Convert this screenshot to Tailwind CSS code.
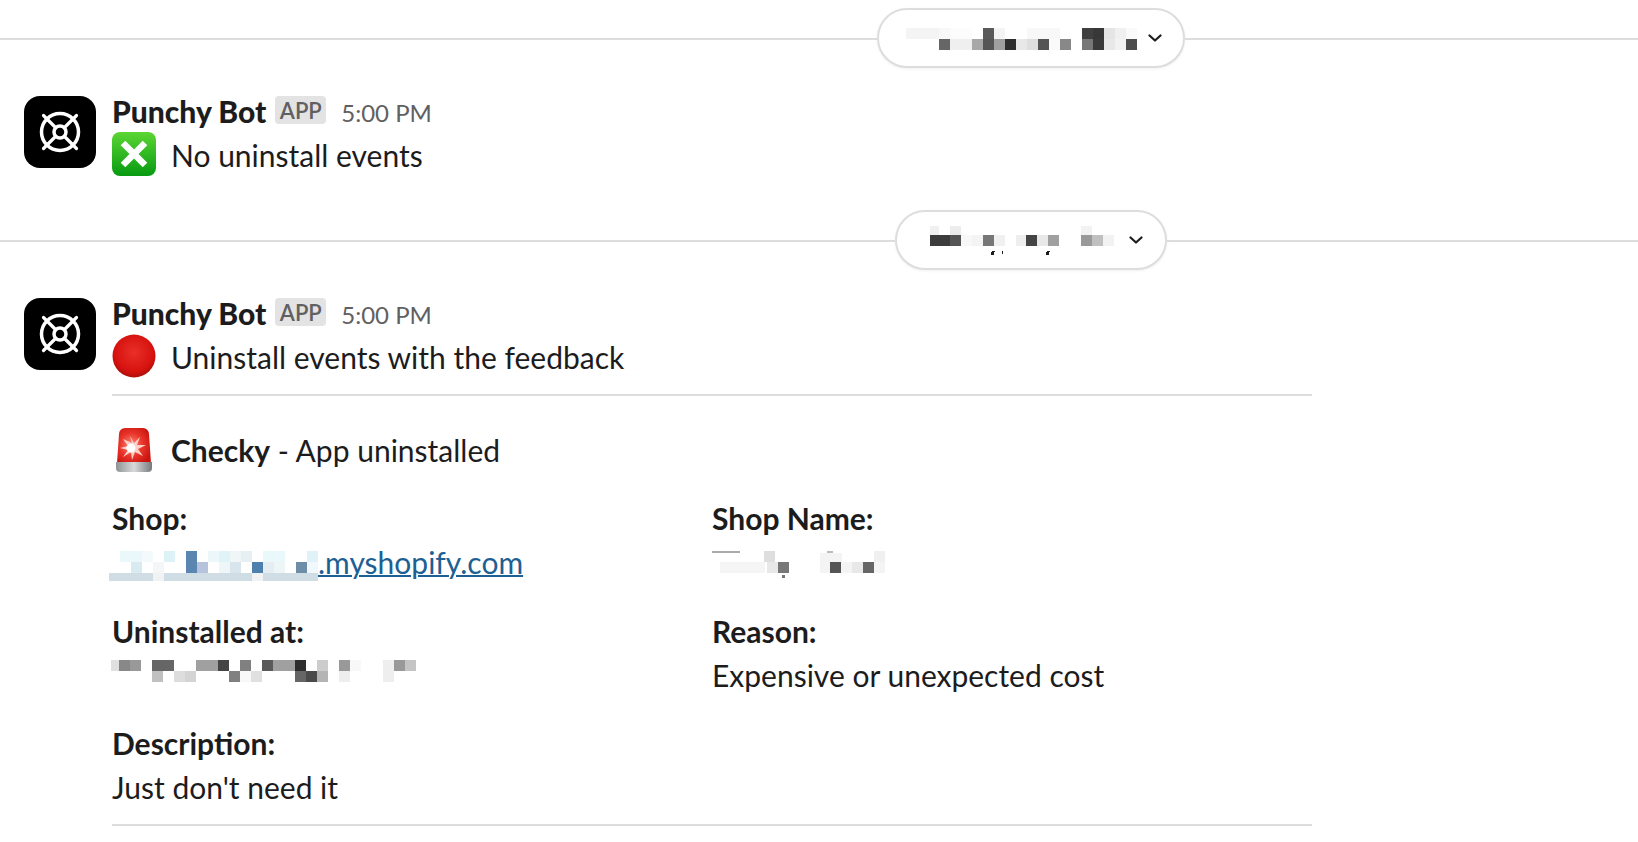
<!doctype html>
<html>
<head>
<meta charset="utf-8">
<script src="https://cdn.jsdelivr.net/npm/@tailwindcss/browser@4"></script>
</head>
<body class="bg-white overflow-hidden [font-family:Lato,sans-serif] text-[#1d1c1d]">
<div class="w-[1638px] h-[842px] flex flex-col pt-2">

  <div class="flex items-center h-[60px]">
    <div class="flex-1 h-0.5 bg-[#dddddd] mt-0.5"></div>
    <div class="w-[308px] h-[60px] rounded-full border-2 border-[#dddddd] bg-white shadow-[0_1px_3px_rgba(0,0,0,0.06)] flex items-center pl-[27px] pr-[21px] justify-between">
      <svg class="mt-0.5" width="231" height="22" viewBox="0 0 231 22" shape-rendering="crispEdges">
        <rect x="0" y="0" width="33" height="11" fill="#f4f4f4"/><rect x="33" y="0" width="11" height="11" fill="#f8f8f8"/><rect x="44" y="0" width="22" height="11" fill="#fcfcfc"/>
        <rect x="77" y="0" width="11" height="11" fill="#5a5a5a"/><rect x="88" y="0" width="11" height="11" fill="#f4f4f4"/><rect x="121" y="0" width="33" height="11" fill="#f8f8f8"/>
        <rect x="176" y="0" width="11" height="11" fill="#3f3f3f"/><rect x="187" y="0" width="11" height="11" fill="#383838"/><rect x="198" y="0" width="11" height="11" fill="#e5e5e5"/><rect x="209" y="0" width="11" height="11" fill="#f0f0f0"/><rect x="220" y="0" width="11" height="11" fill="#fafafa"/>
        <rect x="33" y="11" width="11" height="11" fill="#666666"/><rect x="44" y="11" width="22" height="11" fill="#efefef"/><rect x="66" y="11" width="11" height="11" fill="#a8a8a8"/><rect x="77" y="11" width="11" height="11" fill="#555555"/><rect x="88" y="11" width="11" height="11" fill="#a0a0a0"/><rect x="99" y="11" width="11" height="11" fill="#2e2e2e"/><rect x="110" y="11" width="11" height="11" fill="#e8e8e8"/><rect x="121" y="11" width="11" height="11" fill="#dedede"/><rect x="132" y="11" width="11" height="11" fill="#555555"/><rect x="143" y="11" width="11" height="11" fill="#fafafa"/><rect x="154" y="11" width="11" height="11" fill="#888888"/>
        <rect x="176" y="11" width="11" height="11" fill="#777777"/><rect x="187" y="11" width="11" height="11" fill="#3a3a3a"/><rect x="198" y="11" width="11" height="11" fill="#e8e8e8"/><rect x="209" y="11" width="11" height="11" fill="#f2f2f2"/><rect x="220" y="11" width="11" height="11" fill="#4d4d4d"/>
      </svg>
      <svg width="14" height="8" viewBox="0 0 14 8" fill="none" stroke="#1d1c1d" stroke-width="2.2" stroke-linecap="round" stroke-linejoin="round"><path d="M1.500 1.500 7 6.500l5.500-5"/></svg>
    </div>
    <div class="w-[453px] h-0.5 bg-[#dddddd] mt-0.5"></div>
  </div>

  <div class="flex pl-6 gap-4 mt-[21px]">
    <div class="w-[72px] h-[72px] rounded-2xl bg-black mt-[7px] shrink-0 flex items-center justify-center">
      <svg width="72" height="72" viewBox="0 0 72 72" fill="none" stroke="#fff"><circle cx="36" cy="36" r="18.500" stroke-width="3.500"/><circle cx="36" cy="36" r="6" stroke-width="3.500"/><path d="M40.500 31.500 52.500 19.500M31.500 31.500 19.500 19.500M40.500 40.500 52.500 52.500M31.500 40.500 19.500 52.500" stroke-width="3.200" stroke-linecap="round"/></svg>
    </div>
    <div class="flex flex-col">
      <div class="flex items-center h-11">
        <span class="text-[30px] font-black leading-11">Punchy Bot</span>
        <span class="ml-[9px] -mt-0.5 h-7 w-[51px] rounded bg-[#e3e3e3] text-[#616061] text-[22px] font-semibold flex items-center justify-center">APP</span>
        <span class="ml-[15px] text-[24px] text-[#616061] mt-1">5:00 PM</span>
      </div>
      <div class="flex items-center h-11 gap-[15px]">
        <svg class="-translate-y-px" width="44" height="44" viewBox="0 0 44 44"><defs><linearGradient id="g" x1="0" y1="0" x2="0" y2="1"><stop offset="0" stop-color="#5bd633"/><stop offset="1" stop-color="#089a12"/></linearGradient></defs><rect width="44" height="44" rx="8" fill="url(#g)"/><path d="M11 11 33 33M33 11 11 33" stroke="#fff" stroke-width="6.500" fill="none"/></svg>
        <span class="text-[30px] leading-11">No uninstall events</span>
      </div>
    </div>
  </div>

  <div class="flex items-center h-[60px] mt-[33px]">
    <div class="flex-1 h-0.5 bg-[#dddddd] mt-0.5"></div>
    <div class="w-[272px] h-[60px] rounded-full border-2 border-[#dddddd] bg-white shadow-[0_1px_3px_rgba(0,0,0,0.06)] flex items-center pl-[33px] pr-[22px] justify-between">
      <svg width="187" height="32" viewBox="0 0 187 32" shape-rendering="crispEdges">
        <rect x="0" y="2" width="9" height="9" fill="#f0f0f0"/><rect x="20" y="2" width="11" height="9" fill="#ededed"/><rect x="151" y="2" width="11" height="9" fill="#f2f2f2"/>
        <rect x="0" y="11" width="20" height="11" fill="#3c3c3c"/><rect x="20" y="11" width="11" height="11" fill="#555555"/><rect x="31" y="11" width="11" height="11" fill="#f8f8f8"/><rect x="42" y="11" width="11" height="11" fill="#f4f4f4"/><rect x="53" y="11" width="11" height="11" fill="#777777"/><rect x="64" y="11" width="11" height="11" fill="#f0f0f0"/><rect x="86" y="11" width="10" height="11" fill="#eeeeee"/><rect x="96" y="11" width="11" height="11" fill="#444444"/><rect x="107" y="11" width="11" height="11" fill="#e8e8e8"/><rect x="118" y="11" width="11" height="11" fill="#a0a0a0"/><rect x="151" y="11" width="11" height="11" fill="#999999"/><rect x="162" y="11" width="11" height="11" fill="#c0c0c0"/><rect x="173" y="11" width="11" height="11" fill="#f2f2f2"/>
        <path d="M62 27h3l-1.500 4h-3zM72 27h1.500l-1 3h-1zM117 27h3l-1.500 4h-3z" fill="#1d1c1d"/>
      </svg>
      <svg width="14" height="8" viewBox="0 0 14 8" fill="none" stroke="#1d1c1d" stroke-width="2.200" stroke-linecap="round" stroke-linejoin="round"><path d="M1.500 1.500 7 6.500l5.500-5"/></svg>
    </div>
    <div class="w-[471px] h-0.5 bg-[#dddddd] mt-0.5"></div>
  </div>

  <div class="flex pl-6 gap-4 mt-[21px]">
    <div class="w-[72px] h-[72px] rounded-2xl bg-black mt-[7px] shrink-0 flex items-center justify-center">
      <svg width="72" height="72" viewBox="0 0 72 72" fill="none" stroke="#fff"><circle cx="36" cy="36" r="18.500" stroke-width="3.500"/><circle cx="36" cy="36" r="6" stroke-width="3.500"/><path d="M40.500 31.500 52.500 19.500M31.500 31.500 19.500 19.500M40.500 40.500 52.500 52.500M31.500 40.500 19.500 52.500" stroke-width="3.200" stroke-linecap="round"/></svg>
    </div>
    <div class="flex flex-col w-[1200px]">
      <div class="flex items-center h-11">
        <span class="text-[30px] font-black leading-11">Punchy Bot</span>
        <span class="ml-[9px] -mt-0.5 h-7 w-[51px] rounded bg-[#e3e3e3] text-[#616061] text-[22px] font-semibold flex items-center justify-center">APP</span>
        <span class="ml-[15px] text-[24px] text-[#616061] mt-1">5:00 PM</span>
      </div>
      <div class="flex items-center h-11 gap-[15px]">
        <svg class="-translate-y-px" width="44" height="44" viewBox="0 0 44 44"><defs><radialGradient id="r" cx="0.5" cy="0.42" r="0.6"><stop offset="0" stop-color="#ea2f28"/><stop offset="0.75" stop-color="#d6120f"/><stop offset="1" stop-color="#a50f0c"/></radialGradient></defs><circle cx="22" cy="22" r="21.500" fill="url(#r)"/></svg>
        <span class="text-[30px] leading-11">Uninstall events with the feedback</span>
      </div>
      <div class="h-0.5 bg-[#dddddd] mt-[15px]"></div>
      <div class="flex items-center h-11 gap-[15px] mt-8">
        <svg width="44" height="44" viewBox="0 0 44 44"><defs><radialGradient id="a" cx="0.42" cy="0.48" r="0.62"><stop offset="0" stop-color="#ff8a78"/><stop offset="0.55" stop-color="#e8342a"/><stop offset="1" stop-color="#c9150f"/></radialGradient><linearGradient id="b" x1="0" y1="0" x2="1" y2="0"><stop offset="0" stop-color="#8f9294"/><stop offset="0.5" stop-color="#d8dada"/><stop offset="1" stop-color="#77797b"/></linearGradient></defs><path d="M7 6a6 6 0 0 1 6-6h18a6 6 0 0 1 6 6l2 29H5z" fill="url(#a)"/><path d="M4 34h36v6a4 4 0 0 1-4 4H8a4 4 0 0 1-4-4z" fill="url(#b)"/><path d="M18 8 20 15 11 11 16 18 8 20 16 22 11 29 19 24 20 32 23 24 31 28 26 21 34 17 25 17 28 9 22 15z" fill="#ffd0c8"/><circle cx="19" cy="20" r="4.500" fill="#fff"/></svg>
        <span class="text-[30px] leading-11"><b class="font-bold">Checky</b> - App uninstalled</span>
      </div>
      <div class="grid grid-cols-2 gap-y-[24.5px] mt-6">
        <div>
          <div class="text-[30px] leading-11 font-bold">Shop:</div>
          <div class="flex h-11 text-[30px] leading-11 -ml-[3px]">
            <svg width="209" height="44" viewBox="0 0 209 44" shape-rendering="crispEdges" class="shrink-0">
              <rect x="11" y="11" width="22" height="11" fill="#eaf8fb"/><rect x="33" y="11" width="11" height="11" fill="#f4fafb"/><rect x="55" y="11" width="11" height="11" fill="#ddf2f6"/><rect x="77" y="11" width="11" height="22" fill="#5a86b0"/><rect x="99" y="11" width="11" height="11" fill="#ecf7fa"/><rect x="110" y="11" width="11" height="11" fill="#e0f4f8"/><rect x="121" y="11" width="11" height="11" fill="#f0f6f8"/><rect x="132" y="11" width="11" height="11" fill="#e6eff2"/><rect x="154" y="11" width="22" height="11" fill="#e8f8fb"/><rect x="198" y="11" width="11" height="11" fill="#e0f2f7"/>
              <rect x="22" y="22" width="11" height="11" fill="#d8ebf0"/><rect x="44" y="22" width="11" height="11" fill="#f4f6f7"/><rect x="88" y="22" width="11" height="11" fill="#b5c4dc"/><rect x="110" y="22" width="11" height="11" fill="#eef6f8"/><rect x="121" y="22" width="11" height="11" fill="#d8e5ec"/><rect x="143" y="22" width="11" height="11" fill="#4d80ac"/><rect x="154" y="22" width="11" height="11" fill="#e4eef2"/><rect x="165" y="22" width="11" height="11" fill="#eef5f7"/><rect x="187" y="22" width="11" height="11" fill="#6e8ea8"/><rect x="198" y="22" width="11" height="11" fill="#f0f8fb"/>
              <rect x="0" y="33" width="44" height="8" fill="#d0dde4"/><rect x="44" y="33" width="11" height="8" fill="#f0f2f3"/><rect x="55" y="33" width="88" height="8" fill="#d0dde4"/><rect x="143" y="33" width="11" height="8" fill="#f0f2f3"/><rect x="154" y="33" width="55" height="8" fill="#d0dde4"/>
            </svg>
            <a class="text-[#1d6093] underline decoration-2">.myshopify.com</a>
          </div>
        </div>
        <div>
          <div class="text-[30px] leading-11 font-bold">Shop Name:</div>
          <svg width="180" height="44" viewBox="0 0 180 44" shape-rendering="crispEdges" class="block">
            <rect x="0" y="11" width="28" height="2" fill="#aaaaaa"/><rect x="115" y="11" width="6" height="2" fill="#bbbbbb"/>
            <rect x="52" y="11" width="11" height="11" fill="#dedede"/><rect x="108" y="13" width="22" height="9" fill="#f4f4f4"/><rect x="162" y="11" width="11" height="11" fill="#f0f0f0"/>
            <rect x="8" y="22" width="45" height="11" fill="#f5f5f5"/><rect x="55" y="22" width="11" height="11" fill="#e8e8e8"/><rect x="66" y="22" width="11" height="11" fill="#777777"/><rect x="108" y="22" width="11" height="11" fill="#f4f4f4"/><rect x="118" y="22" width="11" height="11" fill="#555555"/><rect x="129" y="22" width="11" height="11" fill="#f4f4f4"/><rect x="140" y="22" width="11" height="11" fill="#e8e8e8"/><rect x="151" y="22" width="11" height="11" fill="#666666"/><rect x="162" y="22" width="11" height="11" fill="#f4f4f4"/>
            <rect x="70" y="35" width="3" height="3" fill="#777777"/>
          </svg>
        </div>
        <div>
          <div class="text-[30px] leading-11 font-bold">Uninstalled at:</div>
          <svg width="310" height="44" viewBox="0 0 310 44" shape-rendering="crispEdges" class="block -ml-px">
            <rect x="0" y="7" width="8" height="11" fill="#e0e0e0"/><rect x="8" y="7" width="11" height="11" fill="#888888"/><rect x="19" y="7" width="11" height="11" fill="#999999"/><rect x="41" y="7" width="22" height="11" fill="#666666"/><rect x="85" y="7" width="22" height="11" fill="#a0a0a0"/><rect x="107" y="7" width="11" height="11" fill="#444444"/><rect x="129" y="7" width="11" height="11" fill="#808080"/><rect x="151" y="7" width="11" height="11" fill="#5a5a5a"/><rect x="162" y="7" width="22" height="11" fill="#a0a0a0"/><rect x="184" y="7" width="11" height="11" fill="#2e2e2e"/><rect x="206" y="7" width="11" height="11" fill="#cccccc"/><rect x="228" y="7" width="11" height="11" fill="#999999"/><rect x="239" y="7" width="11" height="11" fill="#f8f8f8"/><rect x="272" y="7" width="11" height="11" fill="#eeeeee"/><rect x="283" y="7" width="11" height="11" fill="#999999"/><rect x="294" y="7" width="11" height="11" fill="#c4c4c4"/>
            <rect x="41" y="18" width="11" height="11" fill="#c0c0c0"/><rect x="63" y="18" width="11" height="11" fill="#dddddd"/><rect x="74" y="18" width="11" height="11" fill="#d4d4d4"/><rect x="118" y="18" width="11" height="11" fill="#808080"/><rect x="129" y="18" width="11" height="11" fill="#f8f8f8"/><rect x="140" y="18" width="11" height="11" fill="#e0e0e0"/><rect x="184" y="18" width="11" height="11" fill="#666666"/><rect x="195" y="18" width="11" height="11" fill="#4a4a4a"/><rect x="206" y="18" width="11" height="11" fill="#b4b4b4"/><rect x="228" y="18" width="11" height="11" fill="#eeeeee"/><rect x="272" y="18" width="11" height="11" fill="#eeeeee"/>
          </svg>
        </div>
        <div>
          <div class="text-[30px] leading-11 font-bold">Reason:</div>
          <div class="text-[30px] leading-11">Expensive or unexpected cost</div>
        </div>
        <div>
          <div class="text-[30px] leading-11 font-bold">Description:</div>
          <div class="text-[30px] leading-11">Just don't need it</div>
        </div>
      </div>
      <div class="h-0.5 bg-[#dddddd] mt-[15px]"></div>
    </div>
  </div>
</div>
</body>
</html>
